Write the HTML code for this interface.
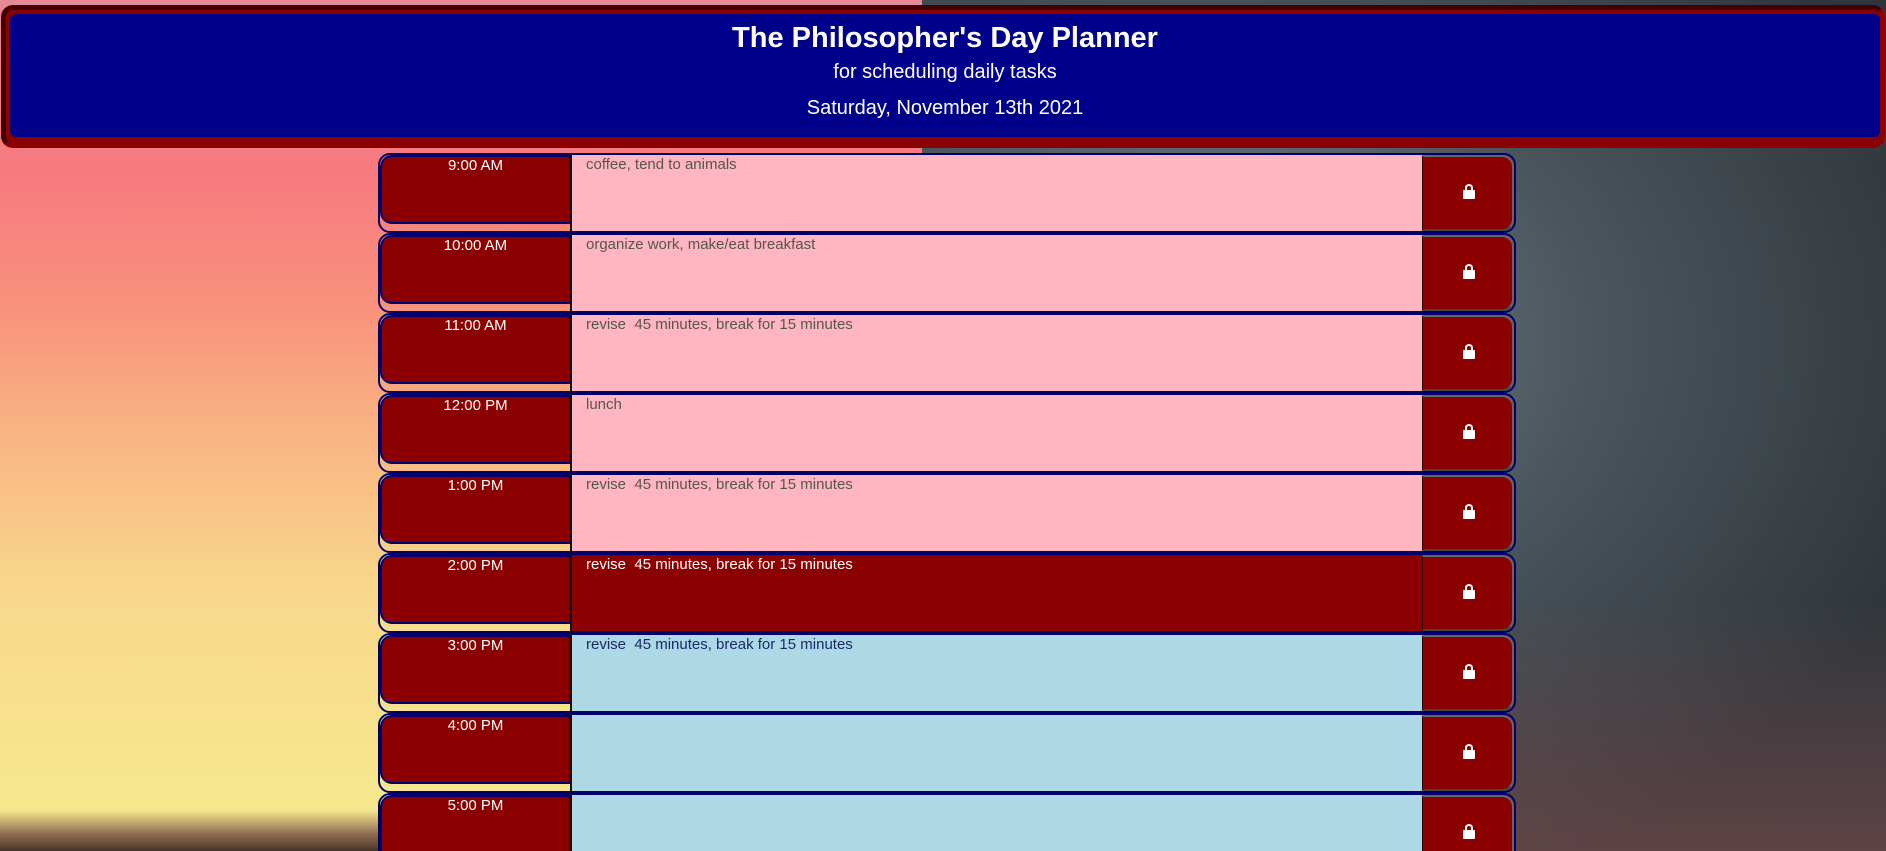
<!DOCTYPE html>
<html><head><meta charset="utf-8"><style>
*{box-sizing:border-box;margin:0;padding:0}
html,body{width:1886px;height:851px;overflow:hidden}
body{font-family:"Liberation Sans",sans-serif;position:relative;background:#3e464c}
.left{position:absolute;left:0;top:0;width:922px;height:851px;background:linear-gradient(180deg,#e48a98 0px,#f77a80 170px,#f8907c 300px,#f9b884 450px,#f8d98c 600px,#f6e88e 810px,#8a6a50 835px,#4a3428 851px)}
.right{position:absolute;left:922px;top:0;width:964px;height:851px;background:radial-gradient(ellipse at 30% 40%,#7a8690 0,#4b555c 40%,#2f363b 80%),#3e464c;}
.right2{position:absolute;left:922px;top:600px;width:964px;height:251px;background:linear-gradient(180deg,rgba(0,0,0,0),rgba(140,80,80,.5));}
header{position:absolute;left:1px;top:5px;width:1884px;height:143px;background:#8b0000;border-radius:12px;border:5px solid #8b0000;border-top-color:#400;border-left-color:#400}
.hin{position:absolute;left:4px;top:4px;right:0;bottom:6px;background:#00008b;border-radius:6px;color:#fff;text-align:center}
h1{font-size:29px;font-weight:bold;margin-top:7px;line-height:34px}
.sub{font-size:20px;line-height:26px;margin-top:4px}
.date{font-size:20px;line-height:26px;margin-top:10px}
.row{position:absolute;left:378px;width:1138px;height:80px;border:2px solid #00006b;border-radius:12px}
.time{position:absolute;left:0;top:0;width:192px;height:69px;background:#8b0000;border:2px solid #00006b;border-radius:12px 0 0 12px;border-right-width:3px;color:#fff;font-size:15px;text-align:center;padding-top:0}
.ta{position:absolute;left:190px;top:-2px;width:852px;height:80px;font-size:15px;padding:1px 14px;color:#555;border-left:2px solid #111;border-top:2px solid #00006b;border-bottom:2px solid #00006b}
.btn{position:absolute;left:1042px;top:0;right:0;height:76px;background:#8b0000;border-radius:0 12px 12px 0;border:2px solid #666;border-left:1px solid #300;border-bottom-color:#444}
.lock{position:absolute;left:40px;top:33px;width:12px;height:9px;background:#fff;border-radius:1px}
.lock:before{content:"";position:absolute;left:2px;top:-6px;width:4px;height:6px;border:2px solid #fff;border-bottom:none;border-radius:4px 4px 0 0}
.past{background:#ffb6c1}.present{background:#8b0000;color:#fff}.future{background:#add8e6;color:#1a2a6b}
</style></head><body>
<div class="left"></div><div class="right"></div><div class="right2"></div>
<header><div class="hin"><h1>The Philosopher's Day Planner</h1><div class="sub">for scheduling daily tasks</div><div class="date">Saturday, November 13th 2021</div></div></header>

<div class="row" style="top:153px"><div class="time">9:00 AM</div><div class="ta past">coffee, tend to animals</div><div class="btn"><div class="lock"></div></div></div>
<div class="row" style="top:233px"><div class="time">10:00 AM</div><div class="ta past">organize work, make/eat breakfast</div><div class="btn"><div class="lock"></div></div></div>
<div class="row" style="top:313px"><div class="time">11:00 AM</div><div class="ta past">revise&nbsp; 45 minutes, break for 15 minutes</div><div class="btn"><div class="lock"></div></div></div>
<div class="row" style="top:393px"><div class="time">12:00 PM</div><div class="ta past">lunch</div><div class="btn"><div class="lock"></div></div></div>
<div class="row" style="top:473px"><div class="time">1:00 PM</div><div class="ta past">revise&nbsp; 45 minutes, break for 15 minutes</div><div class="btn"><div class="lock"></div></div></div>
<div class="row" style="top:553px"><div class="time">2:00 PM</div><div class="ta present">revise&nbsp; 45 minutes, break for 15 minutes</div><div class="btn"><div class="lock"></div></div></div>
<div class="row" style="top:633px"><div class="time">3:00 PM</div><div class="ta future">revise&nbsp; 45 minutes, break for 15 minutes</div><div class="btn"><div class="lock"></div></div></div>
<div class="row" style="top:713px"><div class="time">4:00 PM</div><div class="ta future"></div><div class="btn"><div class="lock"></div></div></div>
<div class="row" style="top:793px"><div class="time">5:00 PM</div><div class="ta future"></div><div class="btn"><div class="lock"></div></div></div>
</body></html>
